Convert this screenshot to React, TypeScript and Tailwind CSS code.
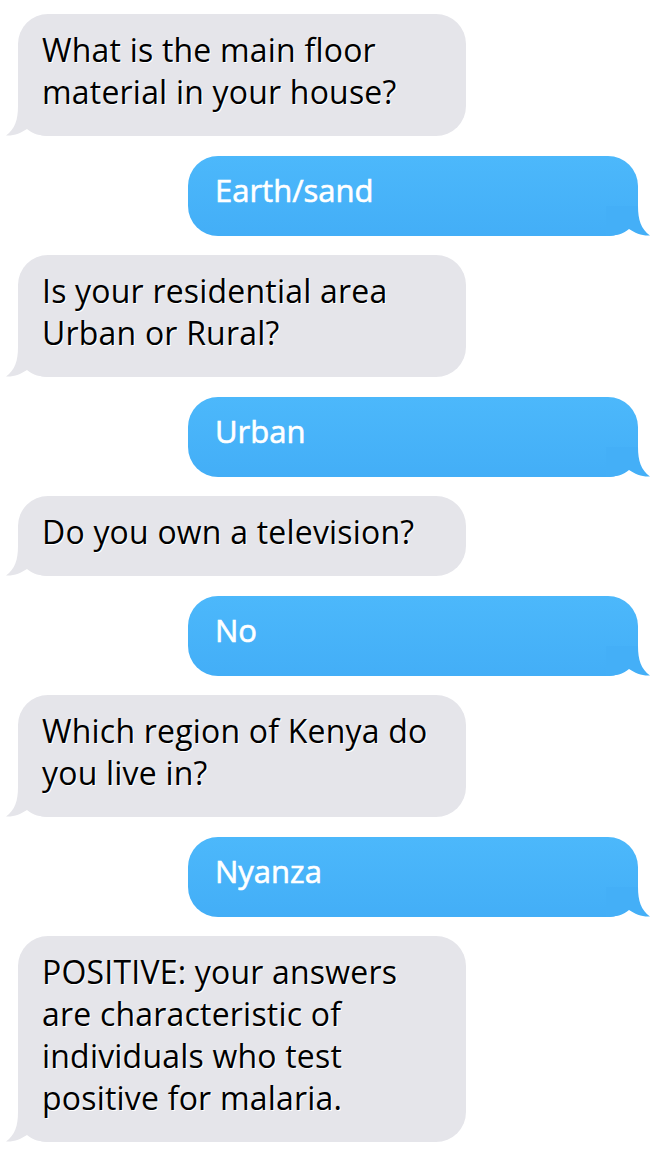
import React from "react";

type Message = { from: "bot" | "user"; text: string };

const messages: Message[] = [
  { from: "bot", text: "What is the main floor material in your house?" },
  { from: "user", text: "Earth/sand" },
  { from: "bot", text: "Is your residential area Urban or Rural?" },
  { from: "user", text: "Urban" },
  { from: "bot", text: "Do you own a television?" },
  { from: "user", text: "No" },
  { from: "bot", text: "Which region of Kenya do you live in?" },
  { from: "user", text: "Nyanza" },
  {
    from: "bot",
    text: "POSITIVE: your answers are characteristic of individuals who test positive for malaria.",
  },
];

// little curled tail at the bottom corner of a bubble
const Tail = ({ className }: { className: string }) => (
  <svg
    width="44"
    height="30"
    viewBox="0 0 44 30"
    className={`absolute bottom-0 ${className}`}
  >
    <path
      d="M12 0 C12 14 9 23 0 29.5 C8 30 15 27 21 23 C27 28 34 30 44 30 L44 0 Z"
      fill="currentColor"
    />
  </svg>
);

const Bubble = ({ msg }: { msg: Message }) => {
  if (msg.from === "bot") {
    return (
      <div className="relative ml-[18px] w-[448px] rounded-[30px] bg-[#e5e5ea] pl-[24px] pr-[18px] pt-[15px] pb-[23px]">
        <Tail className="-left-[12px] text-[#e5e5ea]" />
        <p className="relative text-[32px] leading-[42px] tracking-[0.2px] text-black [text-shadow:1px_1px_0_#fff]">
          {msg.text}
        </p>
      </div>
    );
  }

  return (
    <div className="relative ml-[188px] w-[450px] rounded-[30px] bg-gradient-to-b from-[#4cb8fb] to-[#43aef7] pl-[27px] pr-[20px] pt-[13px] pb-[25px]">
      <Tail className="-right-[12px] -scale-x-100 text-[#44aff7]" />
      <p className="relative text-[31px] leading-[42px] text-white [-webkit-text-stroke:0.6px_#fff]">
        {msg.text}
      </p>
    </div>
  );
};

export default function App() {
  return (
    <div
      className="min-h-screen w-[658px] bg-white pt-[14px]"
      style={{ fontFamily: '"Open Sans", "Noto Sans", sans-serif' }}
    >
      <div className="flex flex-col gap-[19.5px]">
        {messages.map((m, i) => (
          <Bubble key={i} msg={m} />
        ))}
      </div>
    </div>
  );
}
